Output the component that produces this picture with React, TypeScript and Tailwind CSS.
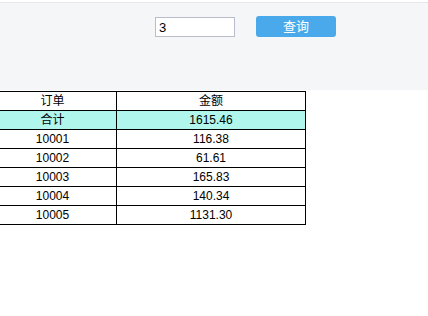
import React from 'react';

const rows = [
    { id: '10001', amount: '116.38' },
    { id: '10002', amount: '61.61' },
    { id: '10003', amount: '165.83' },
    { id: '10004', amount: '140.34' },
    { id: '10005', amount: '1131.30' },
];

const font = { fontFamily: '"Liberation Sans", "Noto Sans CJK SC", sans-serif' };

const App: React.FC = () => {
    return (
        <main className="w-[428px] h-[316px] bg-white overflow-hidden text-black" style={font}>
            {/* search panel */}
            <div className="mt-[2px] border-t border-[#e6e7eb] bg-[#f5f6f8] h-[88px]">
                <div className="flex items-start pt-[14px] pl-[155px]">
                    <input
                        defaultValue="3"
                        className="w-[80px] h-[20px] mt-[0px] border border-[#b9bdc9] bg-white px-[3px] text-[13px] leading-[18px] outline-none"
                    />
                    <button className="ml-[21px] -mt-[1px] w-[80px] h-[21px] rounded-[3px] bg-[#49a9ea] text-white text-[13px] leading-[21px]">
                        查询
                    </button>
                </div>
            </div>

            {/* totals table */}
            <table className="ml-[-12px] mt-[1px] border-collapse text-[12px] text-center">
                <thead>
                    <tr className="h-[19px]">
                        <th className="w-[128px] border border-black font-normal p-0">订单</th>
                        <th className="w-[189px] border border-black font-normal p-0">金额</th>
                    </tr>
                </thead>
                <tbody>
                    <tr className="h-[19px] bg-[#b1f6ec]">
                        <td className="border border-black p-0">合计</td>
                        <td className="border border-black p-0">1615.46</td>
                    </tr>
                    {rows.map((row) => (
                        <tr key={row.id} className="h-[19px]">
                            <td className="border border-black p-0">{row.id}</td>
                            <td className="border border-black p-0">{row.amount}</td>
                        </tr>
                    ))}
                </tbody>
            </table>
        </main>
    );
};

export default App;
